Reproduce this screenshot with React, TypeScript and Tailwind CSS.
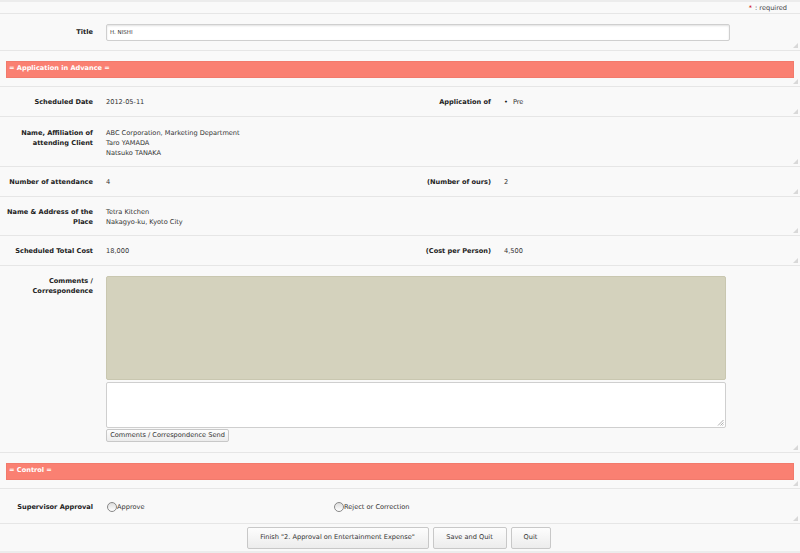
import React from "react";

const font = { fontFamily: '"DejaVu Sans", Verdana, sans-serif' };

function Grip() {
  return (
    <svg className="absolute right-[2px] bottom-[2px]" width="5" height="5" viewBox="0 0 5 5">
      <path d="M5 0 L0 5 L5 5 Z" fill="#d8d8d8" />
    </svg>
  );
}

function Row({ children, className = "" }: { children: React.ReactNode; className?: string }) {
  return (
    <div className={"relative border-b border-[#e6e6e6] flex " + className}>
      {children}
      <Grip />
    </div>
  );
}

function Label({ children, w = "w-[93px]" }: { children: React.ReactNode; w?: string }) {
  return <div className={w + " text-right font-bold text-[#222] leading-[10px] shrink-0"}>{children}</div>;
}

function Val({ children }: { children: React.ReactNode }) {
  return <div className="ml-[13px] text-[#333] leading-[10px]">{children}</div>;
}

function Section({ title }: { title: string }) {
  return (
    <Row className="h-[36px] items-center px-[6px]">
      <div className="w-full h-[17px] mt-[1px] bg-[#fa8072] border border-[#f27a6c] flex items-center px-[2px] text-white font-bold">
        {title}
      </div>
    </Row>
  );
}

function Radio({ label }: { label: string }) {
  return (
    <div className="flex items-center">
      <span className="w-[10px] h-[10px] rounded-full border border-[#888] bg-gradient-to-b from-[#ddd] to-[#fff] inline-block" />
      <span className="text-[#333] mt-[2px]">{label}</span>
    </div>
  );
}

function Btn({ children, w }: { children: React.ReactNode; w: string }) {
  return (
    <div className={w + " h-[22px] flex items-center justify-center border border-[#c8c8c8] rounded-[2px] bg-gradient-to-b from-[#fdfdfd] to-[#ececec] text-[#333]"}>
      {children}
    </div>
  );
}

export default function App() {
  return (
    <div className="w-[800px] h-[553px] bg-[#f9f9f9] text-[6.6px] overflow-hidden" style={font}>
      <div className="h-[2px] bg-[#ececec]" />
      <div className="h-[12px] border-b border-[#e6e6e6] flex items-center justify-end pr-[13px] pt-[3px] text-[#444]">
        <span className="text-[#c00] mr-[3px]">*</span>: required
      </div>
      <Row className="h-[37px] items-center">
        <Label>Title</Label>
        <div className="ml-[13px] w-[624px] h-[17px] bg-white border border-[#cfcfcf] rounded-[2px] shadow-[inset_0_1px_2px_rgba(0,0,0,0.12)] flex items-center px-[3px] text-[5.5px] text-[#333]">
          H. NISHI
        </div>
      </Row>
      <Section title="= Application in Advance =" />
      <Row className="h-[30px] items-center">
        <div className="w-[398px] flex">
          <Label>Scheduled Date</Label>
          <Val>2012-05-11</Val>
        </div>
        <div className="flex">
          <Label>Application of</Label>
          <Val>
            <span className="mr-[5px] text-[#111]">•</span>Pre
          </Val>
        </div>
      </Row>
      <Row className="h-[50px] pt-[11px]">
        <Label>
          Name, Affiliation of
          <br />
          attending Client
        </Label>
        <Val>
          ABC Corporation, Marketing Department
          <br />
          Taro YAMADA
          <br />
          Natsuko TANAKA
        </Val>
      </Row>
      <Row className="h-[30px] items-center">
        <div className="w-[398px] flex">
          <Label>Number of attendance</Label>
          <Val>4</Val>
        </div>
        <div className="flex">
          <Label>(Number of ours)</Label>
          <Val>2</Val>
        </div>
      </Row>
      <Row className="h-[39px] pt-[10px]">
        <Label>
          Name &amp; Address of the
          <br />
          Place
        </Label>
        <Val>
          Tetra Kitchen
          <br />
          Nakagyo-ku, Kyoto City
        </Val>
      </Row>
      <Row className="h-[30px] items-center">
        <div className="w-[398px] flex">
          <Label>Scheduled Total Cost</Label>
          <Val>18,000</Val>
        </div>
        <div className="flex">
          <Label>(Cost per Person)</Label>
          <Val>4,500</Val>
        </div>
      </Row>
      <Row className="h-[187px] pt-[10px]">
        <Label>
          Comments /
          <br />
          Correspondence
        </Label>
        <div className="ml-[13px] flex flex-col">
          <div className="w-[620px] h-[104px] bg-[#d4d2bd] border border-[#c9c7b0] rounded-[2px]" />
          <div className="relative mt-[2px] w-[620px] h-[46px] bg-white border border-[#cfcfcf] rounded-[2px]">
            <svg className="absolute right-[1px] bottom-[1px]" width="7" height="7" viewBox="0 0 7 7">
              <path d="M6.5 1 L1 6.5 M6.5 3.5 L3.5 6.5 M6.5 5.5 L5.5 6.5" stroke="#999" strokeWidth="0.8" />
            </svg>
          </div>
          <div className="mt-[1px] w-[123px] h-[13px] flex items-center justify-center border border-[#c8c8c8] rounded-[2px] bg-gradient-to-b from-[#fdfdfd] to-[#ececec] text-[#333]">
            Comments / Correspondence Send
          </div>
        </div>
      </Row>
      <Section title="= Control =" />
      <Row className="h-[35px] pt-[13px]">
        <div className="w-[327px] flex">
          <Label>Supervisor Approval</Label>
          <div className="ml-[14px] mt-[-1px]">
            <Radio label="Approve" />
          </div>
        </div>
        <div className="ml-[7px] mt-[-1px]">
          <Radio label="Reject or Correction" />
        </div>
      </Row>
      <div className="h-[27px] flex items-center justify-center gap-[4px] pt-[1px] pr-[3px]">
        <Btn w="w-[182px]">Finish "2. Approval on Entertainment Expense"</Btn>
        <Btn w="w-[74px]">Save and Quit</Btn>
        <Btn w="w-[40px]">Quit</Btn>
      </div>
      <div className="h-[4px] bg-[#ececec]" />
    </div>
  );
}
